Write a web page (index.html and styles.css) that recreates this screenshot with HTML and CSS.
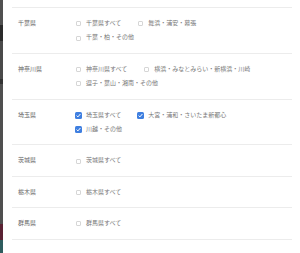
FILE: index.html
```html
<!DOCTYPE html>
<html lang="ja">
<head>
    <meta charset="UTF-8">
    <meta name="viewport" content="width=device-width, initial-scale=1.0">
    <title>エリア選択</title>
    <link rel="stylesheet" href="styles.css">
</head>
<body>
<div class="page">
    <div class="backdrop">
        <div class="shade s1"></div>
        <div class="shade s2"></div>
        <div class="shade s3"></div>
        <div class="shade s4"></div>
        <div class="shade s5"></div>
        <div class="shade s6"></div>
        <div class="shade s7"></div>
    </div>
    <div class="modal">
        <div class="area-list">
            <div class="area-row">
                <div class="area-name">千葉県</div>
                <div class="area-options">
                    <label class="option"><span class="box"></span>千葉県すべて</label>
                    <label class="option"><span class="box"></span>舞浜・浦安・幕張</label>
                    <label class="option"><span class="box"></span>千葉・柏・その他</label>
                </div>
            </div>
            <div class="area-row">
                <div class="area-name">神奈川県</div>
                <div class="area-options">
                    <label class="option"><span class="box"></span>神奈川県すべて</label>
                    <label class="option"><span class="box"></span>横浜・みなとみらい・新横浜・川崎</label>
                    <label class="option"><span class="box"></span>逗子・葉山・湘南・その他</label>
                </div>
            </div>
            <div class="area-row">
                <div class="area-name">埼玉県</div>
                <div class="area-options">
                    <label class="option"><span class="box checked"><svg viewBox="0 0 7 7"><path d="M1.6 3.6 L2.9 4.9 L5.4 2" /></svg></span>埼玉県すべて</label>
                    <label class="option"><span class="box checked"><svg viewBox="0 0 7 7"><path d="M1.6 3.6 L2.9 4.9 L5.4 2" /></svg></span>大宮・浦和・さいたま新都心</label>
                    <label class="option"><span class="box checked"><svg viewBox="0 0 7 7"><path d="M1.6 3.6 L2.9 4.9 L5.4 2" /></svg></span>川越・その他</label>
                </div>
            </div>
            <div class="area-row">
                <div class="area-name">茨城県</div>
                <div class="area-options">
                    <label class="option"><span class="box"></span>茨城県すべて</label>
                </div>
            </div>
            <div class="area-row">
                <div class="area-name">栃木県</div>
                <div class="area-options">
                    <label class="option"><span class="box"></span>栃木県すべて</label>
                </div>
            </div>
            <div class="area-row">
                <div class="area-name">群馬県</div>
                <div class="area-options">
                    <label class="option"><span class="box"></span>群馬県すべて</label>
                </div>
            </div>
        </div>
    </div>
</div>
</body>
</html>
```

FILE: styles.css
```css
body {
    margin: 0;
    padding: 0;
    font-family: "Noto Sans CJK JP", "Noto Sans", sans-serif;
    background-color: #fff;
}

.page {
    display: flex;
    height: 253px;
    overflow: hidden;
}

.backdrop {
    flex: 0 0 3px;
    display: flex;
    flex-direction: column;
    background-color: #4d4d4d;
}

.shade {
    flex: 0 0 auto;
}

.s1 { height: 25px; background-color: #505050; }
.s2 { height: 16px; background-color: #2a2a2a; }
.s3 { height: 38px; background-color: #4a4a4a; }
.s4 { height: 5px; background-color: #333; }
.s5 { height: 140px; background-color: #4f4f4f; }
.s6 { height: 16px; background-color: #5a2233; }
.s7 { height: 13px; background-color: #2f5c5e; }

.modal {
    flex: 1;
    background-color: #fff;
    padding: 7px 8px 0 9px;
}

.area-row {
    display: flex;
    border-top: 1px solid #ececec;
    padding: 8px 0 8px 6px;
    font-size: 6px;
    line-height: 14.4px;
}

.area-row:last-child {
    border-bottom: 1px solid #ececec;
}

.area-name {
    flex: 0 0 57px;
    color: #666;
}

.area-options {
    flex: 1;
    display: flex;
    flex-wrap: wrap;
    column-gap: 16px;
    padding-right: 30px;
    color: #777;
}

.option {
    display: flex;
    align-items: center;
    white-space: nowrap;
}

.box {
    box-sizing: border-box;
    width: 5px;
    height: 5px;
    margin: 1px 5px 0 1px;
    border: 1px solid #d6d6d6;
    border-radius: 1px;
    background-color: #fff;
    display: flex;
}

.box.checked {
    width: 7px;
    height: 7px;
    margin: 1px 4px 0 0;
    border: none;
    border-radius: 1.5px;
    background-color: #3f7fe0;
}

.box svg {
    width: 7px;
    height: 7px;
}

.box path {
    fill: none;
    stroke: #fff;
    stroke-width: 1;
}
```
